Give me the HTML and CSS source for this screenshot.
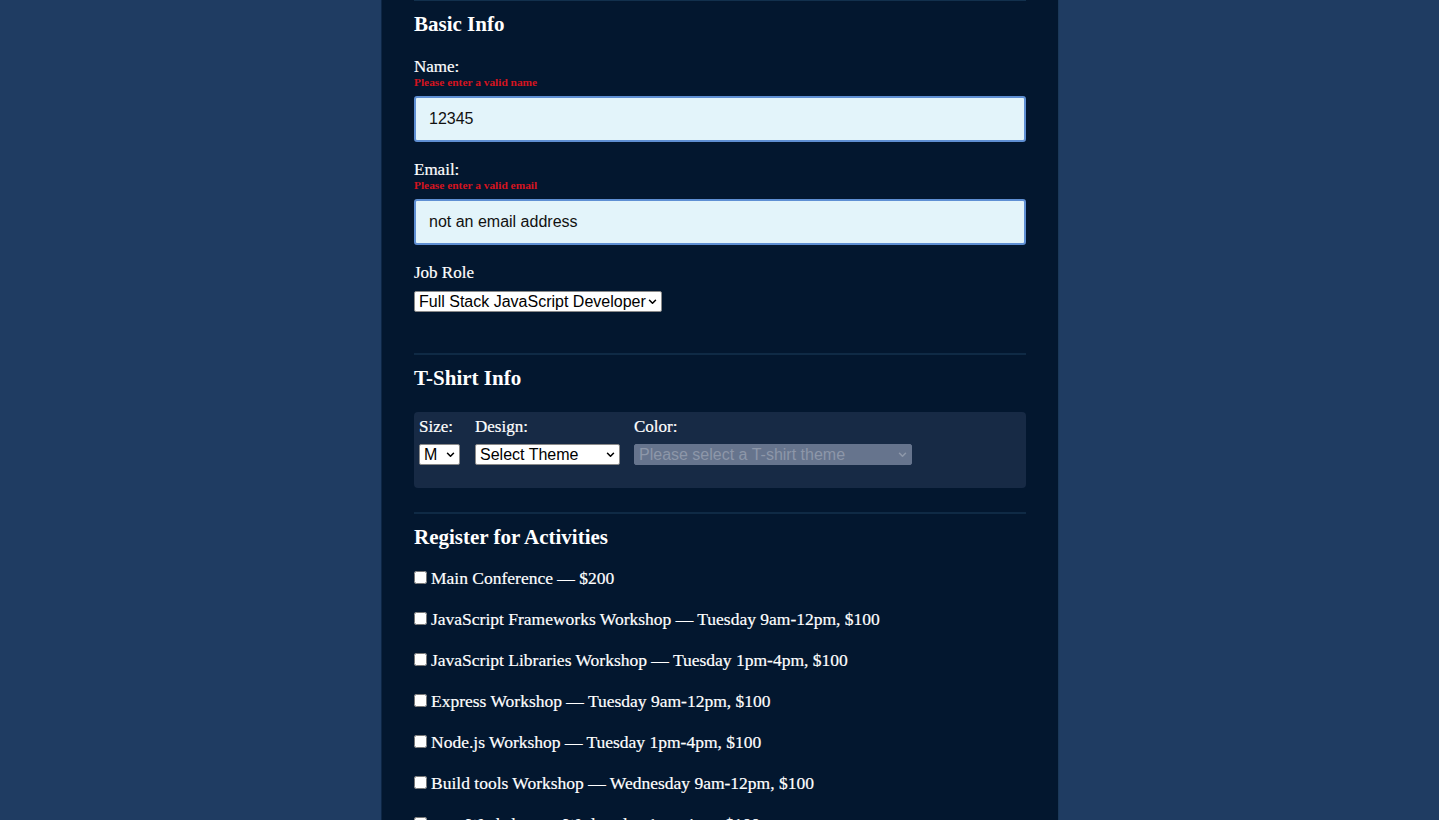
FILE: index.html
```html
<!DOCTYPE html>
<html lang="en">
<head>
<meta charset="utf-8">
<title>Registration</title>
<link rel="stylesheet" href="styles.css">
</head>
<body>
<div class="page">
  <form class="form">
    <section class="fieldset first">
      <h2 class="legend">Basic Info</h2>
      <div class="field">
        <label class="label" for="name">Name:</label>
        <span class="error">Please enter a valid name</span>
        <input class="text-input" id="name" type="text" value="12345">
      </div>
      <div class="field">
        <label class="label" for="mail">Email:</label>
        <span class="error">Please enter a valid email</span>
        <input class="text-input" id="mail" type="text" value="not an email address">
      </div>
      <div class="field">
        <label class="label" for="title">Job Role</label>
        <select class="select select-role" id="title">
          <option>Full Stack JavaScript Developer</option>
        </select>
      </div>
    </section>

    <section class="fieldset shirt">
      <h2 class="legend">T-Shirt Info</h2>
      <div class="shirt-box">
        <div class="shirt-col">
          <label class="label" for="size">Size:</label>
          <select class="select select-size" id="size"><option>M</option></select>
        </div>
        <div class="shirt-col">
          <label class="label" for="design">Design:</label>
          <select class="select select-design" id="design"><option>Select Theme</option></select>
        </div>
        <div class="shirt-col">
          <label class="label" for="color">Color:</label>
          <select class="select select-color" id="color" disabled><option>Please select a T-shirt theme</option></select>
        </div>
      </div>
    </section>

    <section class="fieldset">
      <h2 class="legend">Register for Activities</h2>
      <div class="activities">
        <label class="activity"><input type="checkbox" class="check"><span>Main Conference — $200</span></label>
        <label class="activity"><input type="checkbox" class="check"><span>JavaScript Frameworks Workshop — Tuesday 9am-12pm, $100</span></label>
        <label class="activity"><input type="checkbox" class="check"><span>JavaScript Libraries Workshop — Tuesday 1pm-4pm, $100</span></label>
        <label class="activity"><input type="checkbox" class="check"><span>Express Workshop — Tuesday 9am-12pm, $100</span></label>
        <label class="activity"><input type="checkbox" class="check"><span>Node.js Workshop — Tuesday 1pm-4pm, $100</span></label>
        <label class="activity"><input type="checkbox" class="check"><span>Build tools Workshop — Wednesday 9am-12pm, $100</span></label>
        <label class="activity"><input type="checkbox" class="check"><span>npm Workshop — Wednesday 1pm-4pm, $100</span></label>
      </div>
    </section>
  </form>
</div>
</body>
</html>
```

FILE: styles.css
```css
html, body {
  margin: 0;
  padding: 0;
}

body {
  background: #1f3c62;
  font-family: "Liberation Serif", "Times New Roman", serif;
  color: #f4f6fa;
  overflow: hidden;
}

.page {
  display: flex;
  justify-content: center;
  padding-left: 1px;
}

.form {
  width: 612px;
  padding: 0 32px 40px;
  background: #03172f;
  border-left: 1px solid #0d2645;
  border-right: 1px solid #1a3858;
  min-height: 820px;
}

.fieldset {
  border-top: 2px solid #0f2a45;
  padding-top: 10px;
  padding-bottom: 42px;
}

.fieldset.first {
  border-top: 1px solid #12304d;
  padding-top: 10px;
  padding-bottom: 41px;
}

.fieldset.shirt {
  padding-bottom: 24px;
}

.legend {
  margin: 0;
  font-size: 21px;
  line-height: 26px;
  font-weight: bold;
  color: #ffffff;
}

.field {
  display: flex;
  flex-direction: column;
  align-items: flex-start;
  margin-top: 21px;
}

.field + .field {
  margin-top: 19px;
}

.label {
  font-size: 17px;
  line-height: 18px;
  color: #ffffff;
  -webkit-text-stroke: 0.2px #ffffff;
}

.error {
  font-size: 11.4px;
  line-height: 12px;
  font-weight: bold;
  color: #d4141f;
  margin-bottom: 8px;
}

.text-input {
  box-sizing: border-box;
  width: 612px;
  height: 46px;
  margin: 0;
  padding: 0 13px;
  background: #e3f4fa;
  border: 2px solid #5f8fd3;
  border-radius: 3px;
  font-family: "Liberation Sans", Arial, sans-serif;
  font-size: 16px;
  color: #111111;
  outline: none;
}

.select {
  -webkit-appearance: none;
  appearance: none;
  box-sizing: border-box;
  height: 21px;
  margin: 0;
  padding: 0 12px 0 4px;
  background-color: #ffffff;
  background-image: url("data:image/svg+xml;utf8,<svg xmlns='http://www.w3.org/2000/svg' width='10' height='7' viewBox='0 0 10 7'><path d='M1.5 1.5 L5 5 L8.5 1.5' fill='none' stroke='black' stroke-width='1.8' stroke-linecap='round' stroke-linejoin='round'/></svg>");
  background-repeat: no-repeat;
  background-position: right 4px center;
  background-size: 9px 6px;
  border: 1px solid #8a8a8a;
  border-radius: 2px;
  font-family: "Liberation Sans", Arial, sans-serif;
  font-size: 16px;
  line-height: 19px;
  color: #000000;
}

.select-role {
  width: 248px;
  margin-top: 9px;
}

.shirt-box {
  margin-top: 21px;
  display: flex;
  gap: 15px;
  padding: 6px 5px 23px;
  background: #172a45;
  border-radius: 4px;
}

.shirt-col {
  display: flex;
  flex-direction: column;
  align-items: flex-start;
  gap: 8px;
}

.shirt-col:last-child {
  margin-left: -1px;
}

.select-size { width: 41px; }
.select-design { width: 145px; }
.select-color {
  width: 278px;
  background-color: #66748d;
  border-color: #66748d;
  color: #8d97a9;
  background-image: url("data:image/svg+xml;utf8,<svg xmlns='http://www.w3.org/2000/svg' width='10' height='7' viewBox='0 0 10 7'><path d='M1.5 1.5 L5 5 L8.5 1.5' fill='none' stroke='%238d97a9' stroke-width='1.8' stroke-linecap='round' stroke-linejoin='round'/></svg>");
  opacity: 1;
}

.activities {
  margin-top: 18px;
  display: flex;
  flex-direction: column;
  gap: 21px;
}

.activity {
  display: flex;
  align-items: center;
  gap: 4px;
  font-size: 17.5px;
  line-height: 20px;
  color: #ffffff;
  -webkit-text-stroke: 0.2px #ffffff;
}

.check {
  margin: 0;
  width: 13px;
  height: 13px;
  flex: none;
  position: relative;
  top: -1px;
}
```
